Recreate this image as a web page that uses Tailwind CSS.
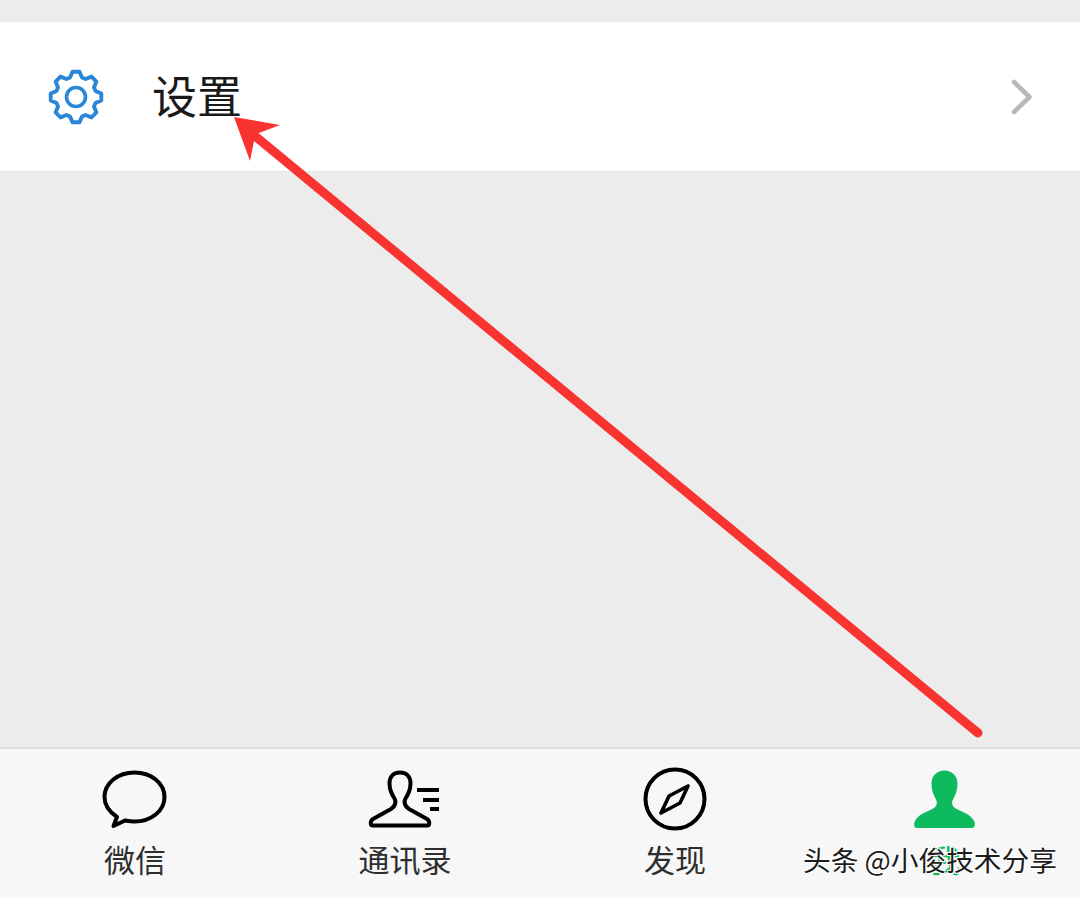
<!DOCTYPE html>
<html lang="en">
  <head>
    <meta charset="UTF-8" />
    <meta name="viewport" content="width=device-width, initial-scale=1.0" />
    <script src="https://cdn.jsdelivr.net/npm/@tailwindcss/browser@4"></script>
    <title>设置</title>
  </head>
  <body class="font-['Noto_Sans_CJK_SC','Noto_Sans',sans-serif]">
    <div class="relative flex flex-col w-[1080px] h-[898px] overflow-hidden bg-[#ececec]">
      <div class="h-[21px] shrink-0"></div>

      <!-- settings row -->
      <div class="flex items-center h-[151px] shrink-0 bg-white border-y border-[#e6e6e6]">
        <svg class="ml-[46px] w-[60px] h-[60px]" viewBox="-30 -30 60 60" fill="none" stroke="#2a87d8">
          <polygon stroke-width="3.9" stroke-linejoin="round" points="-6,-19.5 -3.5,-25.3 3.5,-25.3 6,-19.5 9.6,-18 15.4,-20.4 20.4,-15.4 18,-9.6 19.5,-6 25.3,-3.5 25.3,3.5 19.5,6 18,9.6 20.4,15.4 15.4,20.4 9.6,18 6,19.5 3.5,25.3 -3.5,25.3 -6,19.5 -9.6,18 -15.4,20.4 -20.4,15.4 -18,9.6 -19.5,6 -25.3,3.5 -25.3,-3.5 -19.5,-6 -18,-9.6 -20.4,-15.4 -15.4,-20.4 -9.6,-18" />
          <circle r="9.5" stroke-width="3.6" />
        </svg>
        <span class="ml-[46px] mb-[3px] text-[45px] leading-[60px] text-[#1a1a1a]">设置</span>
        <svg class="ml-auto mr-[46px] w-[24px] h-[40px]" viewBox="1010 77 24 40" fill="none" stroke="#b8b8b8" stroke-width="4.6" stroke-linecap="round" stroke-linejoin="round">
          <polyline points="1014,82 1029.5,97 1014,112" />
        </svg>
      </div>

      <div class="flex-1"></div>

      <!-- tab bar -->
      <div class="grid grid-cols-4 h-[151px] shrink-0 bg-[#f7f7f7] border-t-2 border-[#dedede] pt-[20px] text-[31px] leading-[36px] text-[#2e2e2e]">
        <div class="flex flex-col items-center">
          <svg class="w-[80px] h-[60px] overflow-visible" viewBox="95 770 80 60" fill="none" stroke="#000" stroke-width="4" stroke-linejoin="round">
            <path d="M117 818 C108 812 104.5 806 104.5 798 C104.5 784 118 773.5 134.5 773.5 C151 773.5 164.5 784 164.5 798 C164.5 812 151 822.5 134.5 822.5 C131 822.5 128 822 125 821.5 L113.5 827 Z" />
          </svg>
          <span class="mt-[12px]">微信</span>
        </div>
        <div class="flex flex-col items-center">
          <svg class="w-[80px] h-[60px] overflow-visible" viewBox="365 770 80 60" fill="none" stroke="#000" stroke-width="4" stroke-linejoin="round">
            <path d="M373 826.5 H427 C430 826.5 430 822 427 820 L409 810 C404 807 404 802 405.5 799.5 C408.5 795 410.5 790 410.5 784.5 C410.5 777 406 773.5 400 773.5 C394 773.5 389.5 777 389.5 784.5 C389.5 790 391.5 795 394.5 799.5 C396 802 396 807 391 810 L373 820 C370 822 370 826.5 373 826.5 Z" />
            <path d="M417 791 H439 M423 801 H439 M430 810 H439" />
          </svg>
          <span class="mt-[12px]">通讯录</span>
        </div>
        <div class="flex flex-col items-center">
          <svg class="w-[80px] h-[60px] overflow-visible" viewBox="635 770 80 60" fill="none" stroke="#000" stroke-linejoin="round">
            <circle cx="675" cy="800" r="29.5" stroke-width="4" />
            <path stroke-width="3.6" d="M688 787 L680 804 L661 814 L669 797 Z" />
          </svg>
          <span class="mt-[12px]">发现</span>
        </div>
        <div class="flex flex-col items-center">
          <svg class="w-[80px] h-[60px] overflow-visible" viewBox="905 770 80 60" fill="#0dba5e">
            <path d="M917 829 C913.5 829 913.5 824 915.5 821 C919 815 927 813 934 809 C937.5 806.5 937.5 803 935.5 799.5 C933 795 931.5 790 931.5 784.5 C931.5 776.5 937.5 771.5 944.5 771.5 C951.5 771.5 957.5 776.5 957.5 784.5 C957.5 790 956 795 953.5 799.5 C951.5 803 951.5 806.5 955 809 C962 813 970 815 973.5 821 C975.5 824 975.5 829 972 829 Z" />
          </svg>
          <span class="mt-[12px] text-[#0dba5e]">我</span>
        </div>
      </div>

      <!-- red arrow drawn over the screenshot -->
      <svg class="absolute left-0 top-0 w-[1080px] h-[898px]" viewBox="0 0 1080 898">
        <line x1="978" y1="733" x2="255" y2="136" stroke="#f93330" stroke-width="9" stroke-linecap="round" />
        <polygon fill="#f93330" points="234,117 280,125 259,133 254,141 250,161" />
      </svg>

      <!-- watermark -->
      <span class="absolute left-[803px] top-[840px] text-[27.7px] leading-[38px] whitespace-nowrap text-[#1c1c1c] [text-shadow:1px_1px_0_#fff,-1px_-1px_0_#fff,1px_-1px_0_#fff,-1px_1px_0_#fff]">头条 @小俊技术分享</span>
    </div>
  </body>
</html>
